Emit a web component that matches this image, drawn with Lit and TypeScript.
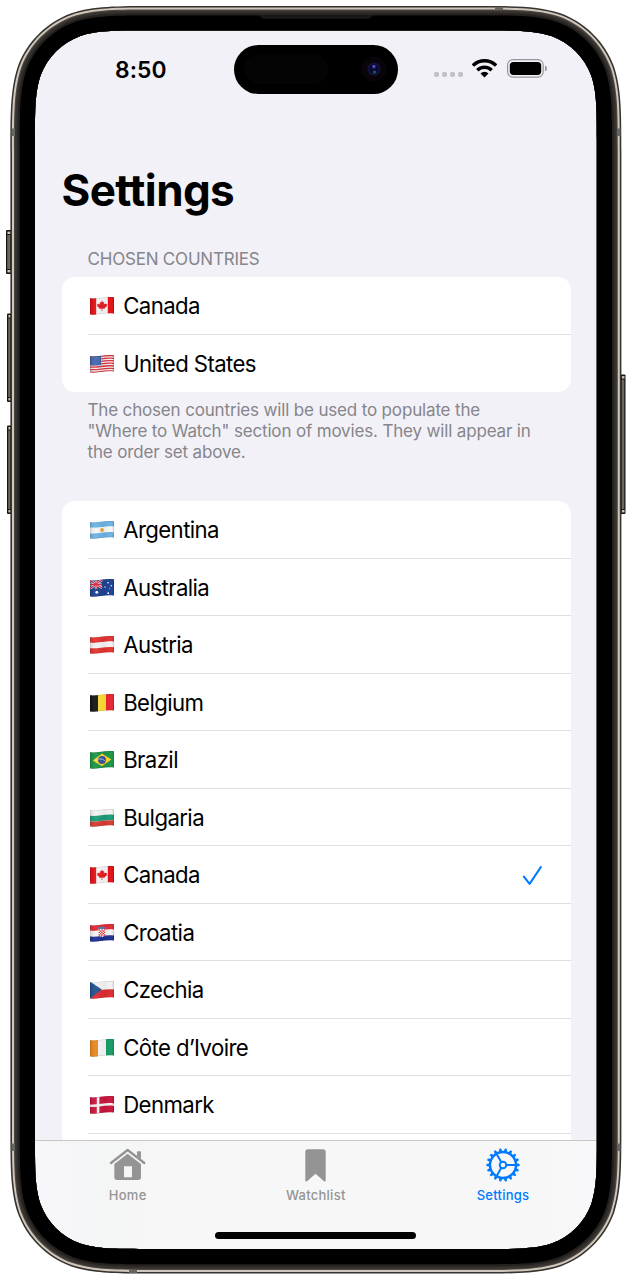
import { LitElement, html, svg, css } from 'lit';
import { customElement, property } from 'lit/decorators.js';

/** Closed rounded rectangle with continuous-curvature corners. */
function squircle(x0: number, y0: number, x1: number, y1: number, r: number): string {
  const a = 1.528665 * r, b = 1.08849323 * r, c = 0.86840694 * r, d = 0.63149399 * r;
  const e = 0.074911 * r, f = 0.37282392 * r, g = 0.16905899 * r;
  return [
    `M${x0 + a} ${y0}H${x1 - a}`,
    `C${x1 - b} ${y0} ${x1 - c} ${y0} ${x1 - d} ${y0 + e}`,
    `C${x1 - f} ${y0 + g} ${x1 - g} ${y0 + f} ${x1 - e} ${y0 + d}`,
    `C${x1} ${y0 + c} ${x1} ${y0 + b} ${x1} ${y0 + a}`,
    `V${y1 - a}`,
    `C${x1} ${y1 - b} ${x1} ${y1 - c} ${x1 - e} ${y1 - d}`,
    `C${x1 - g} ${y1 - f} ${x1 - f} ${y1 - g} ${x1 - d} ${y1 - e}`,
    `C${x1 - c} ${y1} ${x1 - b} ${y1} ${x1 - a} ${y1}`,
    `H${x0 + a}`,
    `C${x0 + b} ${y1} ${x0 + c} ${y1} ${x0 + d} ${y1 - e}`,
    `C${x0 + f} ${y1 - g} ${x0 + g} ${y1 - f} ${x0 + e} ${y1 - d}`,
    `C${x0} ${y1 - c} ${x0} ${y1 - b} ${x0} ${y1 - a}`,
    `V${y0 + a}`,
    `C${x0} ${y0 + b} ${x0} ${y0 + c} ${x0 + e} ${y0 + d}`,
    `C${x0 + g} ${y0 + f} ${x0 + f} ${y0 + g} ${x0 + d} ${y0 + e}`,
    `C${x0 + c} ${y0} ${x0 + b} ${y0} ${x0 + a} ${y0}Z`,
  ].join('');
}

/** Waving horizontal band between two heights of a 24x18 flag. */
function band(top: number, bottom: number, fill: string, x = 0) {
  return svg`<path fill=${fill} d="M${x} ${top + 1.2}C8 ${top + 2} 15 ${top - 1} 24 ${top + 0.2}V${bottom + 0.2}C15 ${bottom - 1} 8 ${bottom + 2} ${x} ${bottom + 1.2}Z"/>`;
}
const column = (x: number, w: number, fill: string) =>
  svg`<rect x=${x} y="0" width=${w} height="18" fill=${fill}/>`;

const flagArt: Record<string, () => unknown> = {
  ca: () => svg`${column(0, 24, '#f6f6f6')}${column(0, 6.2, '#e40d14')}${column(17.8, 6.2, '#e40d14')}
    <path fill="#e8191f" d="M12 3.6l1 1.8 1.2-.6-.5 2.9 1.5-1.5.4.9 1.5-.2-.6 1.5.7.5-2.6 2 .2.9-2.5-.3v2.4h-.7v-2.4l-2.5.4.3-.9-2.6-2.1.7-.4-.5-1.5 1.5.2.4-.9 1.4 1.5-.5-2.9 1.2.6z"/>`,
  us: () => svg`${column(0, 24, '#f2eef0')}
    ${[0, 1, 2, 3, 4, 5, 6].map((i) => band(i * 2.55, i * 2.55 + 1.28, '#d8303c'))}
    <path fill="#3a5ea6" d="M0 0H11V9.9C7 10.6 4 10.6 0 10.2Z"/>
    <path stroke="#9db3dc" stroke-width=".6" stroke-dasharray=".7 1.1" d="M1 3H10M1.8 5H10M1 7H10M1.8 9H10"/>`,
  ar: () => svg`${band(-2, 5.5, '#6cb2e2')}${band(5.5, 11.2, '#f7f7f5')}${band(11.2, 20, '#6cb2e2')}
    <circle cx="12" cy="9" r="1.9" fill="#f0a13c"/>`,
  au: () => svg`${column(0, 24, '#1c4190')}
    <path stroke="#e9e6ee" stroke-width="2.2" d="M0 1.5L12 9M12 1L0 9.6M6 0V10M0 5.5H12"/>
    <path stroke="#dd2338" stroke-width="1.2" d="M0 1.5L12 9M12 1L0 9.6M6 0V10M0 5.5H12"/>
    <g fill="#fff"><circle cx="6.8" cy="13.3" r="1.4"/><circle cx="18" cy="3.7" r=".8"/><circle cx="15" cy="8" r=".7"/><circle cx="21.3" cy="6.7" r=".7"/><circle cx="18.2" cy="14.2" r=".9"/><circle cx="19.6" cy="9.2" r=".45"/></g>`,
  at: () => svg`${band(-2, 5.6, '#e2322f')}${band(5.6, 11, '#f4f2f2')}${band(11, 20, '#e2322f')}`,
  be: () => svg`${column(0, 8, '#151515')}${column(8, 8, '#fbdd33')}${column(16, 8, '#e9232f')}`,
  br: () => svg`${column(0, 24, '#1a9446')}<path fill="#fbd52c" d="M2.8 9.6L12 2.6L21.3 8.4L12 15.3Z"/>
    <circle cx="12" cy="9" r="4" fill="#3b5399"/><path fill="none" stroke="#c9d5ea" stroke-width=".8" d="M8.3 8.1C11 7.4 14 8.6 15.6 10.5"/>`,
  bg: () => svg`${band(-2, 5.6, '#f3f3f3')}${band(5.6, 11.3, '#1c9a78')}${band(11.3, 20, '#d83a30')}`,
  hr: () => svg`${band(-2, 5.6, '#df2a32')}${band(5.6, 11.3, '#f3f3f3')}${band(11.3, 20, '#1d2f91')}
    <path fill="#fff" d="M8.6 5H15.4V10C15.4 14 8.6 14 8.6 10Z"/>
    <path stroke="#df2a32" stroke-width="1.3" stroke-dasharray="1.3 1.3" d="M8.7 5.8H15.3M10 7.1H15.3M8.7 8.4H15.3M10 9.7H15.3M8.7 11H15.3M10.6 12.2H14"/>
    <path fill="#4a7fc0" d="M8.2 4.9L7.9 3L9.6 3.5L12 2.6L14.4 3.2L16.1 2.6L15.8 4.7Z"/>`,
  cz: () => svg`${band(-2, 8.3, '#f3f3f3')}${band(8.3, 20, '#dc2a31')}<path fill="#22528f" d="M0 .5L11.8 8.6L0 17.5Z"/>`,
  ci: () => svg`${column(0, 8, '#e8871c')}${column(8, 8, '#f6f6f6')}${column(16, 8, '#169a62')}`,
  dk: () => svg`${column(0, 24, '#c9143c')}${column(6.8, 2.6, '#f4f1f2')}${band(7.2, 9.7, '#f4f1f2')}`,
};

@customElement('country-flag')
class CountryFlag extends LitElement {
  @property() code = 'ca';

  static styles = css`
    :host { display: block; width: 24px; height: 18px; }
    .flag { display: block; }
  `;

  render() {
    const outline = 'M0 1.3C8 2 15 -.9 24 .3V16.5C15 15.3 8 18.2 0 17.6Z';
    return html`<svg class="flag" width="24" height="18" viewBox="0 0 24 18" aria-hidden="true">
      <defs>
        <clipPath id="wave"><path d=${outline} /></clipPath>
        <linearGradient id="shade">
          <stop offset="0" stop-color="#000" stop-opacity=".1" />
          <stop offset=".25" stop-color="#fff" stop-opacity=".06" />
          <stop offset=".62" stop-color="#000" stop-opacity=".04" />
          <stop offset=".85" stop-color="#fff" stop-opacity=".03" />
          <stop offset="1" stop-color="#000" stop-opacity=".1" />
        </linearGradient>
      </defs>
      <g clip-path="url(#wave)">
        ${flagArt[this.code]()}
        <path d=${outline} fill="url(#shade)" stroke="#000" stroke-opacity=".2" stroke-width=".8" />
      </g>
    </svg>`;
  }
}

@customElement('country-row')
class CountryRow extends LitElement {
  @property() code = '';
  @property() name = '';
  @property({ type: Boolean }) checked = false;
  @property({ type: Boolean }) last = false;

  static styles = css`
    :host { display: block; height: 57.5px; padding-left: 26px; }
    .row {
      display: flex; align-items: center; box-sizing: border-box; height: 100%;
      padding: 2px 28.5px 0 2.5px; border-bottom: 1px solid #e0e0e2;
    }
    .row.last { border-bottom-color: transparent; }
    .name { flex: 1; margin-left: 9.2px; font-size: 22.2px; line-height: 28px; letter-spacing: -0.6px; color: #000; }
  `;

  render() {
    return html`<div class="row ${this.last ? 'last' : ''}">
      <country-flag .code=${this.code}></country-flag>
      <span class="name">${this.name}</span>
      ${this.checked
        ? html`<svg width="20" height="21" viewBox="0 0 20 21" fill="none" stroke="#007aff" stroke-width="2.1" stroke-linecap="round" stroke-linejoin="round"><path d="M1.9 11.6L7.6 18.8L18.9 2" /></svg>`
        : null}
    </div>`;
  }
}

@customElement('status-bar')
class StatusBar extends LitElement {
  static styles = css`
    :host { display: grid; grid-template-columns: 199px 164px 1fr; height: 63.5px; padding-top: 14.5px; align-items: start; }
    .time { padding: 9.5px 0 0 80px; font-size: 22.8px; line-height: 30px; font-weight: 600; letter-spacing: 0.1px; }
    .island { height: 48.5px; border-radius: 25px; background: #000; display: flex; align-items: center; }
    .sensor { width: 84px; height: 30px; margin-left: 10px; border-radius: 15px; background: #040404; }
    .lens { margin-left: 33px; }
    .icons { display: flex; align-items: center; padding: 14.3px 0 0 36px; }
    .signal { display: flex; gap: 3px; padding-top: 12px; }
    .dot { width: 5px; height: 5px; border-radius: 1.7px; background: #c2c1c6; }
    .wifi { margin-left: 8.8px; }
    .battery { margin-left: 10px; }
  `;

  render() {
    return html`
      <div class="time">8:50</div>
      <div class="island">
        <div class="sensor"></div>
        <svg class="lens" width="26" height="26" viewBox="0 0 26 26">
          <circle cx="13" cy="13" r="12.5" fill="#08040a" />
          <circle cx="13" cy="13" r="6.6" fill="#14123a" />
          <circle cx="13" cy="13" r="4.6" fill="#0b0a2b" />
          <circle cx="13" cy="10.8" r="2" fill="#2c2c9c" />
          <circle cx="12.7" cy="10.4" r=".8" fill="#7f86e0" />
          <circle cx="13.4" cy="16" r="1.6" fill="#155a78" />
        </svg>
      </div>
      <div class="icons">
        <div class="signal">${[0, 1, 2, 3].map(() => html`<span class="dot"></span>`)}</div>
        <svg class="wifi" width="25" height="19" viewBox="0 0 25 19">
          <g fill="none" stroke="#000" stroke-width="3.5">
            <path d="M.9 6.6A16.5 16.5 0 0 1 24.1 6.6" />
            <path d="M5.3 11.2A10.1 10.1 0 0 1 19.7 11.2" />
          </g>
          <path d="M8.5 14.4A5.7 5.7 0 0 1 16.5 14.4L12.5 18.6Z" />
        </svg>
        <svg class="battery" width="41" height="19" viewBox="0 0 41 19">
          <rect x=".6" y=".6" width="35.6" height="17.6" rx="5.4" fill="none" stroke="#97969b" stroke-width="1.2" />
          <rect x="2.8" y="2.9" width="31.4" height="13" rx="3.6" />
          <path fill="#97969b" d="M38 6.6C40.6 7.4 40.6 11.6 38 12.4Z" />
        </svg>
      </div>
    `;
  }
}

@customElement('tab-bar')
class TabBar extends LitElement {
  static styles = css`
    :host {
      display: grid; grid-template-rows: 91px auto; height: 109.5px; box-sizing: border-box;
      border-top: 1px solid #c6c6c8;
      background: linear-gradient(90deg, #f7f7fb 0, #f4f5f5 12%, #f7f7f7 25%, #f7f7f7 90%, #f8f8fb 100%);
    }
    .tabs { display: grid; grid-template-columns: 185.4px 190.8px 183.6px; }
    .tab { display: flex; flex-direction: column; align-items: center; padding-top: 6px; color: #949494; }
    .tab.active { color: #007aff; }
    .icon { display: block; height: 36px; }
    .label { margin-top: 3px; font-size: 13px; line-height: 18px; font-weight: 500; letter-spacing: 0.25px; }
    .indicator { width: 201px; height: 7px; border-radius: 4px; background: #000; margin-left: 180.4px; }
  `;

  render() {
    return html`
      <div class="tabs">
        <div class="tab">
          <svg class="icon" width="37.3" height="36" viewBox="0 0 112 108">
            <path fill="none" stroke="currentColor" stroke-width="7" stroke-linecap="round" stroke-linejoin="round" d="M6 48L56 9L106 48" />
            <path fill="currentColor" d="M84 16Q84 13 87 13H93Q96 13 96 16V36L84 27Z" />
            <path fill="currentColor" fill-rule="evenodd" d="M56 20L96 51V91Q96 99 88 99H24Q16 99 16 91V51ZM45 58V91H69V58Z" />
          </svg>
          <span class="label">Home</span>
        </div>
        <div class="tab">
          <svg class="icon" width="21" height="36" viewBox="0 0 21 36">
            <path fill="currentColor" d="M.3 5Q.3 2.2 3 2.2H18Q20.7 2.2 20.7 5V33.2Q20.5 35 19 34.2L10.5 26.8L2 34.2Q.4 35 .3 33.2Z" />
          </svg>
          <span class="label">Watchlist</span>
        </div>
        <div class="tab active">
          <svg class="icon" width="36" height="36" viewBox="-18 -18 36 36" fill="none" stroke="currentColor">
            <circle r="13" stroke-width="2.4" />
            <circle r="3.3" stroke-width="1.9" />
            ${[0, 120, 240].map((a) => svg`<path stroke-width="2" d="M3.6 0H13" transform="rotate(${a})"/>`)}
            ${Array.from({ length: 18 }, (_, i) => svg`<path fill="currentColor" stroke="none" d="M13.4 -1.7L16.6 -.9V.9L13.4 1.7Z" transform="rotate(${i * 20})"/>`)}
          </svg>
          <span class="label">Settings</span>
        </div>
      </div>
      <div class="indicator"></div>
    `;
  }
}

@customElement('phone-frame')
class PhoneFrame extends LitElement {
  static styles = css`
    :host { display: block; pointer-events: none; }
    .frame { display: block; }
  `;

  ring(outer: number, fill: string) {
    const hole = squircle(35, 30.6, 596.8, 1249, 71.8);
    const path = squircle(35 - outer, 30.6 - outer, 596.8 + outer, 1249 + outer, 71.8 + outer);
    return svg`<path fill=${fill} fill-rule="evenodd" d="${path}${hole}"/>`;
  }

  button(x: number, y: number, w: number, h: number) {
    return svg`<rect x=${x} y=${y} width=${w} height=${h} rx="1" fill="#171411"/>
      <rect x=${x + 1.2} y=${y + 5} width=${w - 2.4} height=${h - 10} fill="#6b655f"/>
      <rect x=${x + 1.4} y=${y + 1.6} width=${w - 2.4} height="2.4" fill="#cfc6bb"/>
      <rect x=${x + 1.4} y=${y + h - 4} width=${w - 2.4} height="2.4" fill="#cfc6bb"/>`;
  }

  render() {
    return html`<svg class="frame" width="632" height="1280" viewBox="0 0 632 1280" aria-hidden="true">
      ${this.button(6, 230, 5.5, 44)}
      ${this.button(7, 313.5, 4.5, 88.5)}
      ${this.button(7, 425.5, 4.5, 88.5)}
      ${this.button(620.5, 374.5, 5, 139.5)}
      ${this.ring(24.6, '#37332f')}
      ${this.ring(23, '#cfc6bc')}
      ${this.ring(21, '#4c4641')}
      ${this.ring(19.8, '#35312e')}
      ${this.ring(17.4, '#24211f')}
      ${this.ring(15.2, '#000')}
      <g fill="#66645f">
        <rect x="11.5" y="128.5" width="3.5" height="7.5" />
        <rect x="617" y="128.5" width="3.5" height="7.5" />
        <rect x="11.5" y="1143.5" width="3.5" height="7.5" />
        <rect x="617" y="1143.5" width="3.5" height="7.5" />
        <rect x="495" y="6.8" width="8" height="3.4" />
        <rect x="129" y="1269.5" width="8" height="3.5" />
      </g>
      <path d="M260 14.5H372L370.5 17Q370 18 368 18H264Q262 18 261.5 17Z" fill="#141412" stroke="#33322e" stroke-width=".6" />
    </svg>`;
  }
}

interface Country { code: string; name: string; checked?: boolean }

@customElement('app-root')
class AppRoot extends LitElement {
  static styles = css`
    :host {
      display: grid; width: 632px; height: 1280px; overflow: hidden; background: #fff;
      font-family: Inter, "Liberation Sans", sans-serif; color: #000;
    }
    .screen, .hardware { grid-area: 1 / 1; }
    .screen {
      display: flex; flex-direction: column; box-sizing: border-box;
      margin: 30.5px 35px 31px 35px; border-radius: 60px; overflow: hidden; background: #f2f1f7;
    }
    .content { flex: 1; min-height: 0; overflow: hidden; padding: 0 26.3px 0 26.5px; }
    .title { margin: 53px 0 0; font-size: 44px; line-height: 56px; font-weight: 700; letter-spacing: -0.6px; font-feature-settings: "calt" 0; }
    .header { margin: 31px 26px 0; font-size: 17px; line-height: 20px; color: #85858a; letter-spacing: -0.2px; white-space: nowrap; }
    .footer { margin: 8px 26px 0; height: 63px; font-size: 17px; line-height: 21px; color: #85858a; letter-spacing: -0.16px; white-space: nowrap; }
    .card { background: #fff; border-radius: 13px; overflow: hidden; }
    .chosen { margin-top: 8.7px; }
    .all { margin-top: 37.9px; padding-bottom: 40px; }
  `;

  chosen: Country[] = [{ code: 'ca', name: 'Canada' }, { code: 'us', name: 'United States' }];

  countries: Country[] = [
    { code: 'ar', name: 'Argentina' },
    { code: 'au', name: 'Australia' },
    { code: 'at', name: 'Austria' },
    { code: 'be', name: 'Belgium' },
    { code: 'br', name: 'Brazil' },
    { code: 'bg', name: 'Bulgaria' },
    { code: 'ca', name: 'Canada', checked: true },
    { code: 'hr', name: 'Croatia' },
    { code: 'cz', name: 'Czechia' },
    { code: 'ci', name: 'Côte d’Ivoire' },
    { code: 'dk', name: 'Denmark' },
  ];

  render() {
    return html`
      <div class="screen">
        <status-bar></status-bar>
        <main class="content">
          <h1 class="title">Settings</h1>
          <div class="header">CHOSEN COUNTRIES</div>
          <div class="card chosen">
            ${this.chosen.map((c, i) => html`<country-row .code=${c.code} .name=${c.name} .last=${i === this.chosen.length - 1}></country-row>`)}
          </div>
          <div class="footer">The chosen countries will be used to populate the<br />"Where to Watch" section of movies. They will appear in<br />the order set above.</div>
          <div class="card all">
            ${this.countries.map((c) => html`<country-row .code=${c.code} .name=${c.name} .checked=${!!c.checked}></country-row>`)}
          </div>
        </main>
        <tab-bar></tab-bar>
      </div>
      <phone-frame class="hardware"></phone-frame>
    `;
  }
}
